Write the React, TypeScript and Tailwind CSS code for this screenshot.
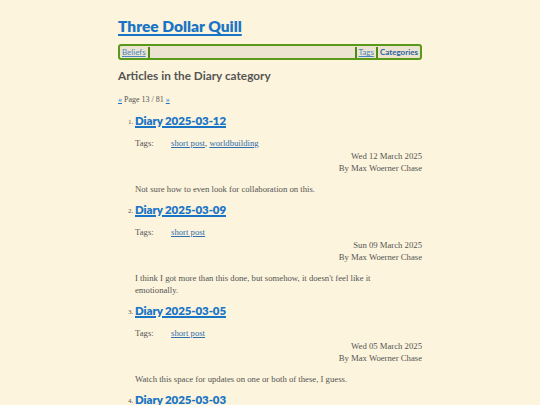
const posts = [
  {
    title: "Diary 2025-03-12",
    tags: ["short post", "worldbuilding"],
    date: "Wed 12 March 2025",
    summary: "Not sure how to even look for collaboration on this.",
  },
  {
    title: "Diary 2025-03-09",
    tags: ["short post"],
    date: "Sun 09 March 2025",
    summary:
      "I think I got more than this done, but somehow, it doesn't feel like it emotionally.",
  },
  {
    title: "Diary 2025-03-05",
    tags: ["short post"],
    date: "Wed 05 March 2025",
    summary: "Watch this space for updates on one or both of these, I guess.",
  },
  {
    title: "Diary 2025-03-03",
    tags: ["short post"],
    date: "Mon 03 March 2025",
    summary: "More notes.",
  },
];

const heading = "font-['Lato','Open_Sans',sans-serif]";
const body = "font-['Liberation_Serif','DejaVu_Serif',serif]";

function Sep() {
  return <span className="mx-[2px] inline-block h-[11px] w-[2px] bg-[#4d8a12]" />;
}

export default function App() {
  return (
    <div className={`min-h-[405px] w-[540px] overflow-hidden bg-[#fcf4dc] ${body} text-[#555]`}>
      <div className="mx-auto w-[304px] pt-[14px]">
        <h1 className={`${heading} text-[15.5px] font-extrabold leading-[24px]`}>
          <a href="#" className="text-[#1a74c6] underline decoration-[1.5px] underline-offset-2">
            Three Dollar Quill
          </a>
        </h1>

        <nav className={`${heading} mt-[6px] flex h-[16px] items-center rounded-[3px] border-2 border-[#5a9a1a] bg-[#ece4d0] px-[2px] text-[8px]`}>
          <a href="#" className="text-[#4a86c0] underline">Beliefs</a>
          <Sep />
          <span className="flex-1" />
          <Sep />
          <a href="#" className="text-[#4a86c0] underline">Tags</a>
          <Sep />
          <a href="#" className="font-bold text-[#2a62a0]">Categories</a>
        </nav>

        <h2 className={`${heading} mt-[7px] text-[11.8px] font-bold leading-[18px] text-[#555]`}>
          Articles in the Diary category
        </h2>

        <p className="mt-[10px] text-[8px] leading-[10px] text-[#555]">
          <a href="#" className="text-[#1a74c6] underline">«</a> Page 13 / 81{" "}
          <a href="#" className="text-[#1a74c6] underline">»</a>
        </p>

        <ol className="mt-[7px] pl-[17px]">
          {posts.map((p, i) => (
            <li key={p.title} className="mb-[6px] flex">
              <span className="-ml-[7px] w-[7px] pt-[5px] text-[7px] leading-[10px]">{i + 1}.</span>
              <div className="flex-1">
                <h3 className={`${heading} text-[11.5px] font-extrabold leading-[18px] tracking-[-0.1px]`}>
                  <a href="#" className="text-[#1a74c6] underline decoration-[1.5px] underline-offset-[1px]">
                    {p.title}
                  </a>
                </h3>
                <div className="mt-[8px] flex text-[8.7px] leading-[11px]">
                  <span className="w-[36px]">Tags:</span>
                  <span>
                    {p.tags.map((t, j) => (
                      <span key={t}>
                        {j > 0 && ", "}
                        <a href="#" className="text-[#2f6fb0] underline">{t}</a>
                      </span>
                    ))}
                  </span>
                </div>
                <div className="mt-[1px] text-right text-[8.7px] leading-[12px]">
                  <div>{p.date}</div>
                  <div>By Max Woerner Chase</div>
                </div>
                <p className="mt-[9px] pr-[30px] text-[8.7px] leading-[12px]">{p.summary}</p>
              </div>
            </li>
          ))}
        </ol>
      </div>
    </div>
  );
}
